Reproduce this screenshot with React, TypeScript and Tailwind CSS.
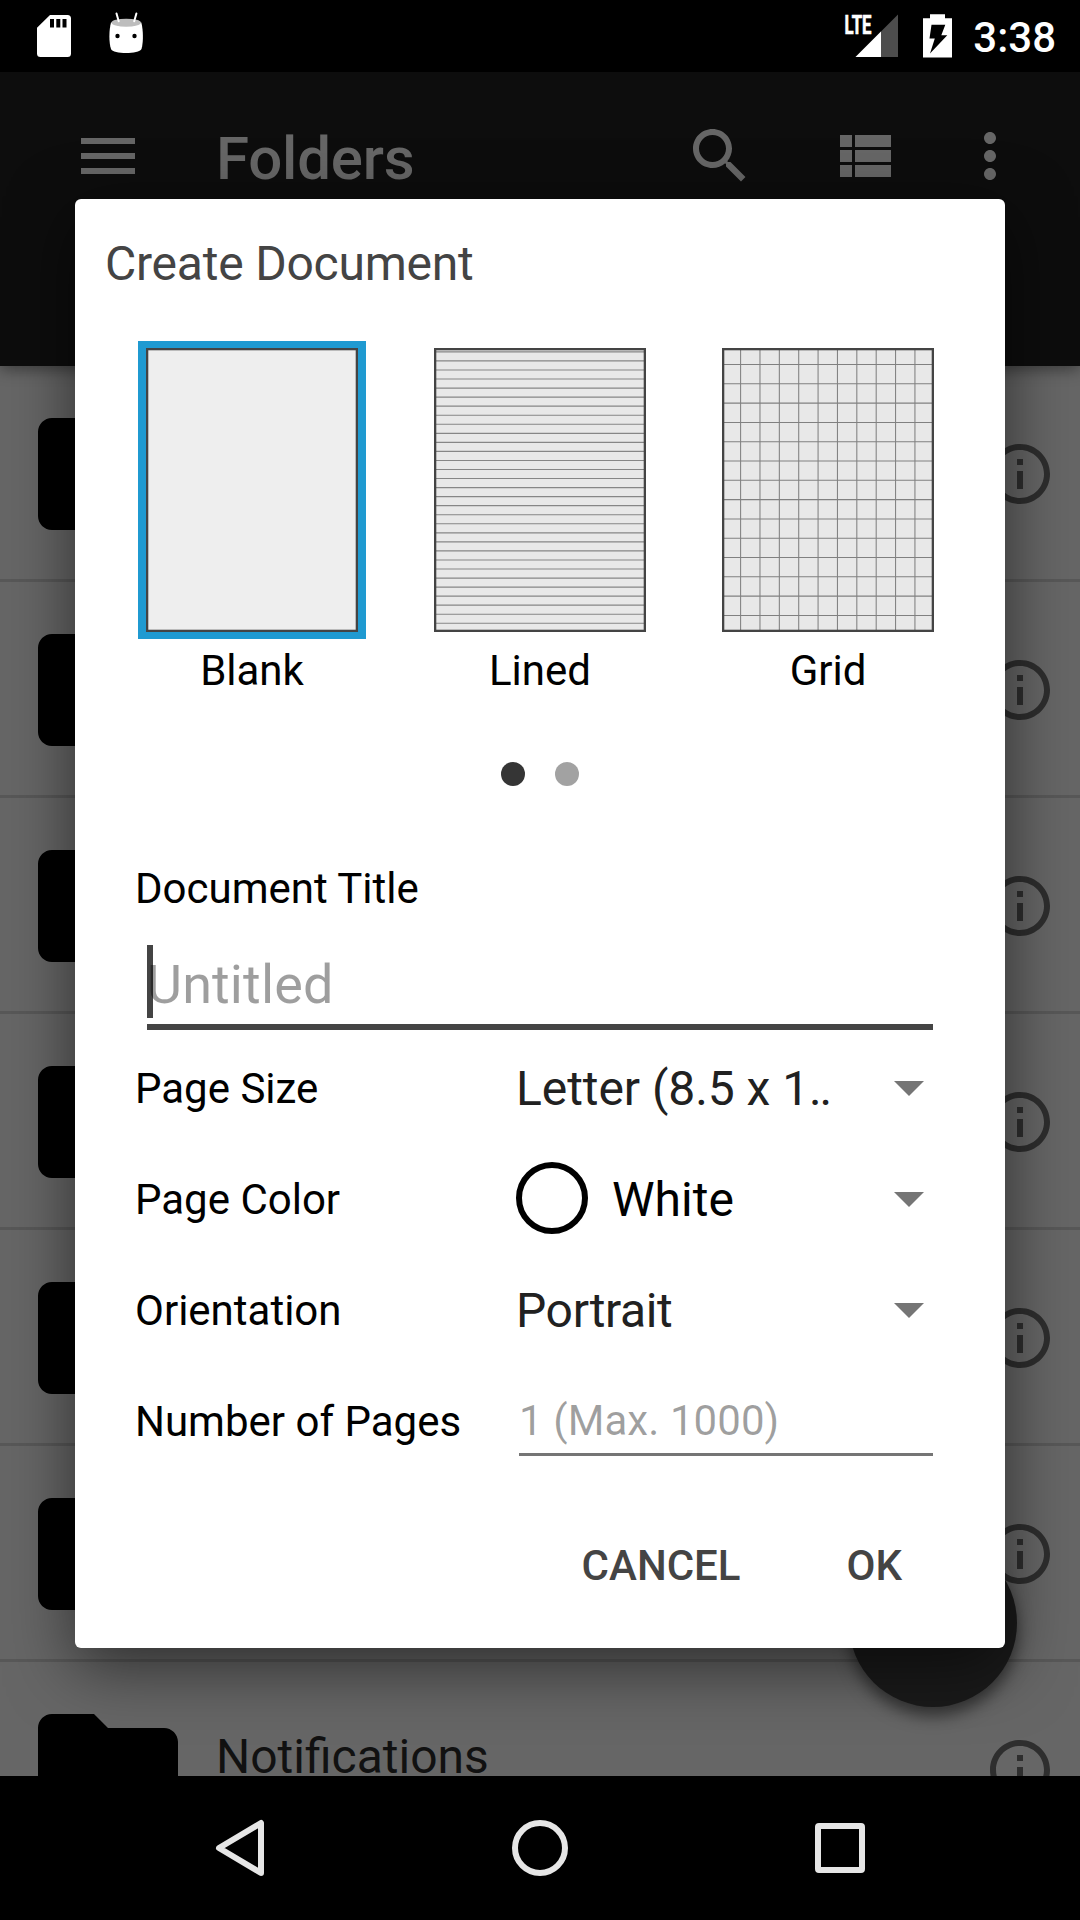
import React from "react";

const LINES = Array.from({ length: 31 }, (_, i) => 3.9 + i * 9.046);
const GRID_X = Array.from({ length: 10 }, (_, i) => 18.6 + i * 19.37);
const GRID_Y = Array.from({ length: 14 }, (_, i) => 16.5 + i * 19.3);

function StatusBar() {
  return (
    <div className="flex h-[72px] shrink-0 items-start justify-between bg-black pl-9 pr-6">
      <div className="flex">
        <svg className="h-[72px] w-9" viewBox="36 0 36 72">
          <path d="M50 15h17.5a3.5 3.5 0 0 1 3.5 3.5v35a3.5 3.5 0 0 1-3.5 3.5h-27a3.5 3.5 0 0 1-3.5-3.5V27.8z" fill="#fff" />
          <path d="M50 19h4v8.5h-4zM56.300 19h4v8.500h-4zM62.500 19h4v8.500h-4z" fill="#000" />
        </svg>
        <svg className="ml-9 h-[72px] w-9" viewBox="108 0 36 72">
          <path d="M111 22.500c-2 7-2.300 20 0 26.500 2 5.300 28 5.300 30.500 0 2-6.500 1.800-19.500-.2-26.500z" fill="#fff" />
          <ellipse cx="126.200" cy="22.700" rx="14.700" ry="4" fill="#bdbdbd" />
          <path d="M116.500 13.500l2.200 7.800M136.400 13.500l-2.200 7.800" stroke="#fff" strokeWidth="2" strokeLinecap="round" />
          <circle cx="117.500" cy="36" r="2.200" fill="#000" />
          <circle cx="134.500" cy="36" r="2.200" fill="#000" />
        </svg>
      </div>
      <div className="flex">
        <svg className="h-[72px] w-[56px]" viewBox="844 0 56 72">
          <text x="844.500" y="33.700" fontSize="26" fontWeight="700" textLength="27" lengthAdjust="spacingAndGlyphs" fill="#fff" stroke="#fff" strokeWidth="0.700">LTE</text>
          <path d="M898 14.500V57H855.500z" fill="#4d4d4d" />
          <path d="M881 31.500V57H855.500z" fill="#fff" />
        </svg>
        <svg className="ml-[22px] h-[72px] w-8" viewBox="922 0 32 72">
          <path d="M930 14.300h15v4h7v39.200h-29V18.300h7z" fill="#fff" />
          <path d="M931.500 24.700h13.800l-4 10.500h6L930 53.500l4.800-15h-5.300z" fill="#000" />
        </svg>
        <span className="ml-[19px] mt-[13px] text-[42px] font-medium leading-[50px] text-white">3:38</span>
      </div>
    </div>
  );
}

function AppBar() {
  return (
    <header className="relative z-10 h-[294px] shrink-0 bg-[#0d0d0d] shadow-[0_4px_14px_rgba(0,0,0,0.4)]">
      <div className="flex h-[168px] items-center pl-[72px] pr-[54px] text-[#666]">
        <svg className="size-[72px]" viewBox="0 0 24 24" fill="currentColor">
          <path d="M3 18h18v-2H3v2zm0-5h18v-2H3v2zm0-7v2h18V6H3z" />
        </svg>
        <h1 className="ml-[72px] mt-[5px] flex-1 text-[60px] font-medium leading-[70px] tracking-[-0.2px]">Folders</h1>
        <svg className="size-[72px]" viewBox="0 0 24 24" fill="currentColor">
          <path d="M15.500 14h-.79l-.28-.27C15.410 12.590 16 11.110 16 9.500 16 5.910 13.090 3 9.500 3S3 5.910 3 9.500 5.910 16 9.500 16c1.610 0 3.090-.59 4.230-1.570l.27.28v.79l5 4.990L20.490 19l-4.990-5zm-6 0C7.010 14 5 11.990 5 9.500S7.010 5 9.500 5 14 7.010 14 9.500 11.990 14 9.500 14z" />
        </svg>
        <svg className="ml-[72px] size-[72px]" viewBox="0 0 24 24" fill="currentColor">
          <path d="M4 14h4v-4H4v4zm0 5h4v-4H4v4zM4 9h4V5H4v4zm5 5h12v-4H9v4zm0 5h12v-4H9v4zM9 5v4h12V5H9z" />
        </svg>
        <svg className="ml-[54px] size-[72px]" viewBox="0 0 24 24" fill="currentColor">
          <path d="M12 8c1.100 0 2-.9 2-2s-.9-2-2-2-2 .9-2 2 .9 2 2 2zm0 2c-1.100 0-2 .9-2 2s.9 2 2 2 2-.9 2-2-.9-2-2-2zm0 6c-1.100 0-2 .9-2 2s.9 2 2 2 2-.9 2-2-.9-2-2-2z" />
        </svg>
      </div>
    </header>
  );
}

function FolderRow({ name }: { name?: string }) {
  return (
    <div className="flex h-[216px] shrink-0 items-start pl-6 pr-6">
      <svg className="mt-6 size-[168px]" viewBox="0 0 24 24" fill="#000">
        <path d="M10 4H4c-1.100 0-2 .9-2 2v12c0 1.100.9 2 2 2h16c1.100 0 2-.9 2-2V8c0-1.100-.9-2-2-2h-8z" />
      </svg>
      <div className="ml-6 mt-[67px] flex-1 text-[48px] leading-[56px] text-[#111]">{name}</div>
      <svg className="mt-[72px] size-[72px]" viewBox="0 0 24 24" fill="#2e2e2e">
        <path d="M11 17h2v-6h-2v6zm1-15C6.480 2 2 6.480 2 12s4.480 10 10 10 10-4.480 10-10S17.520 2 12 2zm0 18c-4.410 0-8-3.590-8-8s3.590-8 8-8 8 3.590 8 8-3.590 8-8 8zM11 9h2V7h-2v2z" />
      </svg>
    </div>
  );
}

function FolderList() {
  return (
    <main className="min-h-0 flex-1 overflow-hidden bg-[#666]">
      <div className="flex flex-col">
        {["", "", "", "", "", "", "Notifications"].map((name, i) => (
          <div key={i} className={i === 0 ? "" : "-mt-[3px] border-t-[3px] border-[#585858]"}>
            <FolderRow name={name} />
          </div>
        ))}
      </div>
    </main>
  );
}

function Template({ label, selected, kind }: { label: string; selected?: boolean; kind: "blank" | "lined" | "grid" }) {
  return (
    <div className="flex w-[288px] flex-col items-center">
      <div className={selected ? "my-px bg-[#1f9ad1] px-2 py-[7px]" : "p-2"}>
        <svg className="block h-[284px] w-[212px]" viewBox="0 0 212 284">
          <rect width="212" height="284" fill={kind === "blank" ? "#eee" : "#e8e8e8"} />
          {kind === "lined" && LINES.map((y) => <path key={y} d={`M0 ${y}H212`} stroke="#868686" strokeWidth="1.150" />)}
          {kind === "grid" && (
            <g stroke="#808080" strokeWidth="1.050">
              {GRID_X.map((x) => <path key={x} d={`M${x} 0V284`} />)}
              {GRID_Y.map((y) => <path key={y} d={`M0 ${y}H212`} />)}
            </g>
          )}
          <rect x="1.150" y="1.150" width="209.700" height="281.700" fill="none" stroke="#444" strokeWidth="2.300" />
        </svg>
      </div>
      <span className="text-[42px] leading-[61px] text-black">{label}</span>
    </div>
  );
}

function Arrow() {
  return (
    <svg className="mr-[9px] h-[15px] w-[30px] shrink-0" viewBox="0 0 30 15">
      <path d="M0 0h30L15 15z" fill="#757575" />
    </svg>
  );
}

function Field({ label, children }: { label: string; children: React.ReactNode }) {
  return (
    <div className="flex h-[111px] items-center">
      <span className="w-[381px] shrink-0 text-[42px] leading-[50px] text-black">{label}</span>
      {children}
    </div>
  );
}

function Dialog() {
  return (
    <section className="absolute left-[75px] top-[199px] z-20 flex h-[1449px] w-[930px] flex-col rounded-[6px] bg-white shadow-[0_18px_66px_rgba(0,0,0,0.56)]">
      <h2 className="pl-[30px] text-[48px] leading-[129px] tracking-[-0.22px] text-[#444]">Create Document</h2>
      <div className="mt-3 flex pl-[33px]">
        <Template label="Blank" kind="blank" selected />
        <Template label="Lined" kind="lined" />
        <Template label="Grid" kind="grid" />
      </div>
      <div className="mt-[61px] flex justify-center gap-[30px]">
        <span className="size-6 rounded-full bg-[#353535]" />
        <span className="size-6 rounded-full bg-[#a2a2a2]" />
      </div>
      <div className="mt-[73px] flex flex-col pl-[60px] pr-[72px]">
        <span className="text-[42px] leading-[60px] text-black">Document Title</span>
        <div className="relative ml-3 mt-[26px] h-[85px] border-b-[6px] border-[#444]">
          <span className="absolute left-0 top-0 h-[73px] w-1.5 bg-[#444]" />
          <span className="relative block text-[54px] leading-[79px] tracking-[0.12px] text-black/38">Untitled</span>
        </div>
        <div className="mt-[3px] flex flex-col">
          <Field label="Page Size">
            <span className="flex-1 whitespace-nowrap text-[48px] leading-[56px] tracking-[-0.06px] text-[#212121]">
              Letter (8.5 x 1<span className="tracking-[-2.2px]">..</span>
            </span>
            <Arrow />
          </Field>
          <Field label="Page Color">
            <span className="mb-[3px] size-[72px] rounded-full border-[6px] border-black" />
            <span className="ml-6 flex-1 text-[48px] leading-[56px] text-black">White</span>
            <Arrow />
          </Field>
          <Field label="Orientation">
            <span className="flex-1 text-[48px] leading-[56px] tracking-[-0.36px] text-[#212121]">Portrait</span>
            <Arrow />
          </Field>
          <Field label="Number of Pages">
            <span className="ml-[3px] mt-[22px] h-[68px] flex-1 self-start border-b-[3px] border-[#757575] text-[42px] leading-[66px] tracking-[0.08px] text-black/38">1 (Max. 1000)</span>
          </Field>
        </div>
      </div>
      <div className="mt-4 flex h-[145px] items-center justify-end gap-[106px] pr-[103px] text-[42px] font-medium leading-[50px] text-[#444]">
        <span>CANCEL</span>
        <span>OK</span>
      </div>
    </section>
  );
}

function NavBar() {
  return (
    <nav className="relative z-30 flex h-36 shrink-0 items-center justify-center gap-[228px] bg-black">
      {[
        <path key="back" d="M57 11v50L15 36z" />,
        <circle key="home" cx="36" cy="36" r="25" />,
        <rect key="recent" x="14" y="14" width="44" height="44" rx="1" />,
      ].map((shape, i) => (
        <svg key={i} className="size-[72px]" viewBox="0 0 72 72" fill="none" stroke="#e6e6e6" strokeWidth="6" strokeLinejoin="round">
          {shape}
        </svg>
      ))}
    </nav>
  );
}

export default function App() {
  return (
    <div className="relative flex h-[1920px] w-[1080px] flex-col overflow-hidden bg-black font-[Roboto,sans-serif]">
      <StatusBar />
      <AppBar />
      <FolderList />
      <div className="absolute left-[849px] top-[1539px] size-[168px] rounded-full bg-[#1a1a1a] shadow-[0_9px_16px_rgba(0,0,0,0.5)]" />
      <Dialog />
      <NavBar />
    </div>
  );
}
